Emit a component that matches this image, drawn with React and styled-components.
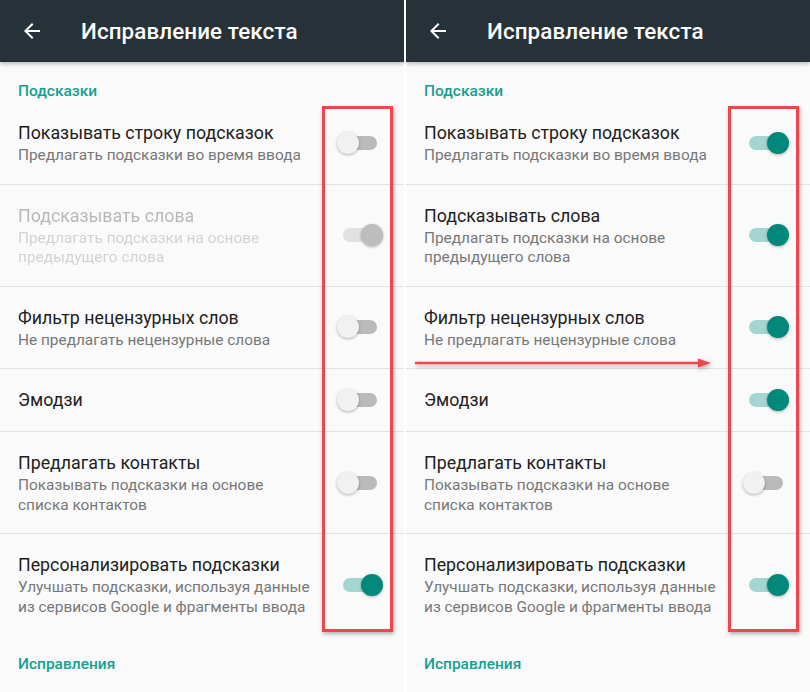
import React from 'react';
import styled, { createGlobalStyle } from 'styled-components';

const GlobalStyle = createGlobalStyle`
   html, body {
      margin: 0;
      padding: 0;
      background: #ffffff;
   }
   body {
      font-family: Roboto, "Noto Sans", "DejaVu Sans", sans-serif;
      -webkit-font-smoothing: antialiased;
   }
`;

const leftItems = [
   { title: 'Показывать строку подсказок', sub: 'Предлагать подсказки во время ввода', on: false },
   { title: 'Подсказывать слова', sub: 'Предлагать подсказки на основе предыдущего слова', on: true, disabled: true },
   { title: 'Фильтр нецензурных слов', sub: 'Не предлагать нецензурные слова', on: false },
   { title: 'Эмодзи', on: false },
   { title: 'Предлагать контакты', sub: 'Показывать подсказки на основе списка контактов', on: false },
   { title: 'Персонализировать подсказки', sub: 'Улучшать подсказки, используя данные из сервисов Google и фрагменты ввода', on: true },
];

const rightItems = [
   { title: 'Показывать строку подсказок', sub: 'Предлагать подсказки во время ввода', on: true },
   { title: 'Подсказывать слова', sub: 'Предлагать подсказки на основе предыдущего слова', on: true },
   { title: 'Фильтр нецензурных слов', sub: 'Не предлагать нецензурные слова', on: true },
   { title: 'Эмодзи', on: true },
   { title: 'Предлагать контакты', sub: 'Показывать подсказки на основе списка контактов', on: false },
   { title: 'Персонализировать подсказки', sub: 'Улучшать подсказки, используя данные из сервисов Google и фрагменты ввода', on: true },
];

const BackArrow = () => (
   <svg width="24" height="24" viewBox="0 0 24 24">
      <path d="M20 11H7.83l5.59-5.59L12 4l-8 8 8 8 1.41-1.41L7.83 13H20v-2z" fill="#ffffff" />
   </svg>
);

const Switch = ({ on, disabled }) => (
   <SwitchBox>
      <Track on={on ? 1 : 0} disabled={disabled}>
         <Thumb on={on ? 1 : 0} disabled={disabled} />
      </Track>
   </SwitchBox>
);

const Screen = ({ items, showArrow }) => (
   <Panel>
      <Toolbar>
         <BackArrow />
         <ToolbarTitle>Исправление текста</ToolbarTitle>
      </Toolbar>
      <List>
         <Category>Подсказки</Category>
         {items.map((item, i) => (
            <Row key={i} last={i === items.length - 1}>
               <RowText disabled={item.disabled}>
                  <RowTitle>{item.title}</RowTitle>
                  {item.sub && <RowSub>{item.sub}</RowSub>}
               </RowText>
               <Switch on={item.on} disabled={item.disabled} />
            </Row>
         ))}
         <Category>Исправления</Category>
      </List>
      <Highlight />
      {showArrow && (
         <Arrow>
            <svg width="298" height="12" viewBox="0 0 298 12">
               <line x1="0" y1="6" x2="288" y2="6" stroke="#f0464c" strokeWidth="2.5" />
               <path d="M283 1.5 L296 6 L283 10.5 Z" fill="#f0464c" />
            </svg>
         </Arrow>
      )}
   </Panel>
);

const App = () => {
   return (
      <Page>
         <GlobalStyle />
         <Screen items={leftItems} />
         <Screen items={rightItems} showArrow />
      </Page>
   );
};

const Page = styled.div`
   display: flex;
   gap: 2px;
   width: 810px;
   height: 692px;
   overflow: hidden;
   background: #ffffff;
`;

const Panel = styled.section`
   position: relative;
   flex: 1;
   background: #fafafa;
   overflow: hidden;
`;

const Toolbar = styled.header`
   display: flex;
   align-items: center;
   height: 62px;
   padding-left: 20px;
   background: #263238;
   box-shadow: 0 2px 4px rgba(0, 0, 0, 0.25);
   position: relative;
   z-index: 1;
`;

const ToolbarTitle = styled.h1`
   margin: 0 0 0 37px;
   font-size: 22.4px;
   font-weight: 500;
   color: #ffffff;
   letter-spacing: 0.1px;
`;

const List = styled.div`
   display: flex;
   flex-direction: column;
`;

const Category = styled.div`
   padding: 20px 18px 0;
   height: 20px;
   line-height: 18px;
   font-size: 15.5px;
   font-weight: 500;
   color: #169f90;
`;

const Row = styled.div`
   display: flex;
   align-items: center;
   padding: 18px 21px 18px 18px;
   border-bottom: ${({ last }) => (last ? 'none' : '1px solid #e3e3e3')};
`;

const RowText = styled.div`
   flex: 1;
   max-width: 294px;
   margin-right: auto;
   opacity: ${({ disabled }) => (disabled ? 0.3 : 1)};
`;

const RowTitle = styled.div`
   font-size: 17.8px;
   line-height: 26px;
   color: #212121;
   white-space: nowrap;
`;

const RowSub = styled.div`
   font-size: 15.4px;
   line-height: 19.5px;
   color: #777777;
`;

const SwitchBox = styled.div`
   width: 46px;
   height: 24px;
   display: flex;
   align-items: center;
   justify-content: center;
   flex-shrink: 0;
`;

const Track = styled.div`
   position: relative;
   width: 34px;
   height: 14px;
   border-radius: 7px;
   background: ${({ on, disabled }) =>
      disabled ? '#e2e2e2' : on ? '#a3d6d0' : '#bababa'};
`;

const Thumb = styled.div`
   position: absolute;
   top: -4px;
   ${({ on }) => (on ? 'right: -6px;' : 'left: -6px;')}
   width: 22px;
   height: 22px;
   border-radius: 50%;
   background: ${({ on, disabled }) =>
      disabled ? '#bdbdbd' : on ? '#00897b' : '#f1f1f1'};
   box-shadow: 0 1px 3px rgba(0, 0, 0, 0.3);
`;

const Highlight = styled.div`
   position: absolute;
   left: 322px;
   top: 106px;
   width: 65px;
   height: 520px;
   border: 3px solid #f0464c;
   box-shadow: 1px 2px 4px rgba(0, 0, 0, 0.3);
   pointer-events: none;
`;

const Arrow = styled.div`
   position: absolute;
   left: 9px;
   top: 357px;
   line-height: 0;
   filter: drop-shadow(1px 2px 2px rgba(0, 0, 0, 0.3));
`;

export default App;
